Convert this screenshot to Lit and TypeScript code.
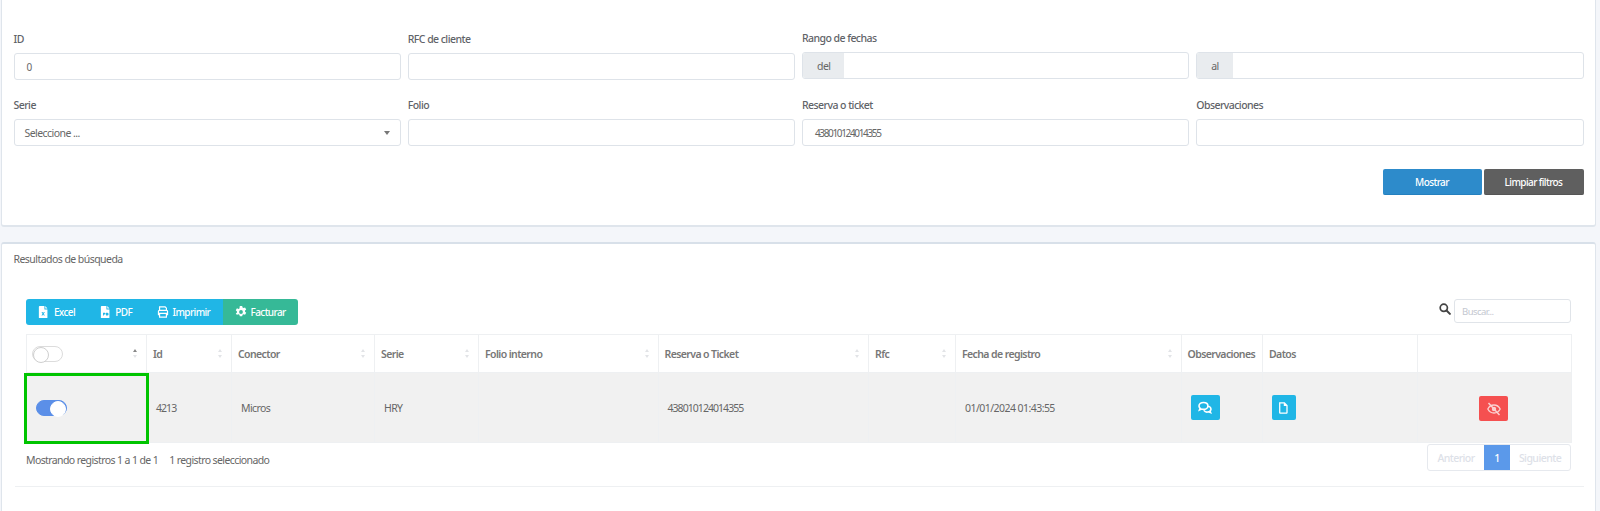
import { LitElement, html, css, svg } from "lit";
import { customElement } from "lit/decorators.js";
import { styleMap } from "lit/directives/style-map.js";

const columns = [
  { w: 120, label: "", sort: true, switch: true },
  { w: 85, label: "Id", sort: true },
  { w: 143, label: "Conector", sort: true },
  { w: 104, label: "Serie", sort: true },
  { w: 179.5, label: "Folio interno", sort: true },
  { w: 210.5, label: "Reserva o Ticket", sort: true },
  { w: 87, label: "Rfc", sort: true },
  { w: 225.5, label: "Fecha de registro", sort: true },
  { w: 81.5, label: "Observaciones", sort: false },
  { w: 155, label: "Datos", sort: false },
  { w: 154, label: "", sort: false },
];

const icons = {
  excel: svg`<path fill="currentColor" d="M2 0h5.5v4H11v9.5a.8.8 0 0 1-.8.8H1.8a.8.8 0 0 1-.8-.8V1a1 1 0 0 1 1-1zM8.5 0 11 3H8.5zM4 7l1.3 2L4 11h1.2L6 9.8 6.8 11H8L6.7 9 8 7H6.800L6 8.200 5.200 7z"/>`,
  pdf: svg`<path fill="currentColor" d="M2 0h5.5v4H11v9.5a.8.8 0 0 1-.8.8H1.8a.8.8 0 0 1-.8-.8V1a1 1 0 0 1 1-1zM8.5 0 11 3H8.5zM3.5 8v3h1V10h1a1 1 0 0 0 0-2zM7 8v3h1.5a1.5 1.5 0 0 0 0-3z"/>`,
  print: svg`<path fill="none" stroke="currentColor" stroke-width="1.4" d="M3 5V1h6.5L11 2.5V5M3 10H1.7V6.2A1.2 1.2 0 0 1 2.9 5h8.2a1.2 1.2 0 0 1 1.2 1.2V10H11M3 8.5h8V13H3z"/>`,
  cog: svg`<path fill="currentColor" fill-rule="evenodd" d="M5.6 0h2.8l.4 1.8 1.2.6 1.7-.7 1.4 2.4-1.4 1.2v1.4l1.4 1.2-1.4 2.4-1.700-.7-1.200.6-.4 1.800H5.600l-.4-1.800-1.200-.6-1.700.7L.9 8.900l1.400-1.200V6.300L.9 5.100l1.400-2.400 1.700.7 1.200-.6zM7 4.800a2.200 2.200 0 1 0 0 4.400 2.200 2.200 0 0 0 0-4.400z"/>`,
  search: svg`<circle cx="5.6" cy="5.6" r="4.2" fill="none" stroke="currentColor" stroke-width="2"/><path d="m8.8 8.8 3.9 3.9" stroke="currentColor" stroke-width="2.4" stroke-linecap="round"/>`,
  comments: svg`<path fill="none" stroke="currentColor" stroke-width="1.6" d="M5.5 1.500C3 1.500 1 3 1 4.900c0 .9.5 1.700 1.100 2.300L1.400 9l2.200-.9c.6.2 1.200.3 1.900.3 2.500 0 4.400-1.500 4.400-3.500S8 1.500 5.500 1.500zM10.600 5.200c1.400.5 2.400 1.500 2.400 2.800 0 .8-.4 1.500-1 2l.6 1.600-2-.8c-1.600.5-3.800 0-4.700-1.400"/>`,
  file: svg`<path fill="none" stroke="currentColor" stroke-width="1.5" d="M2 1h5.500L10.500 4v8.300a.7.7 0 0 1-.7.700H2.700a.7.7 0 0 1-.7-.7zM7.500 1v3h3"/>`,
  eyeoff: svg`<path fill="none" stroke="currentColor" stroke-width="1.3" d="M.8 7C2.200 4.300 4.400 3 7 3s4.800 1.300 6.200 4c-1.400 2.700-3.600 4-6.200 4S2.200 9.700.8 7z"/><circle cx="7" cy="7" r="2.200" fill="currentColor"/><path d="M1.500 1 12.500 13" stroke="currentColor" stroke-width="1.500"/>`,
};

function icon(name: keyof typeof icons, size = 14) {
  return html`<svg class="ic" width=${size} height=${size} viewBox="0 0 14 14" aria-hidden="true">${icons[name]}</svg>`;
}

@customElement("app-root")
export class AppRoot extends LitElement {
  static styles = css`
    :host {
      display: block;
      height: 511px;
      overflow: hidden;
      background: #f4f6fa;
      font-family: "Noto Sans", "Open Sans", sans-serif;
      font-size: 10.5px;
      letter-spacing: -0.55px;
      color: #666;
    }
    * { box-sizing: border-box; }
    .card {
      margin: 0 4px 0 1px;
      background: #fff;
      border: 1px solid #dfe5ec;
      padding: 0 11.5px;
    }
    .filters {
      border-top: 0;
      border-bottom-width: 2px;
      border-radius: 0 0 3px 3px;
      height: 227px;
      padding-top: 32px;
    }
    .grid {
      display: grid;
      grid-template-columns: repeat(4, 1fr);
      column-gap: 7px;
      row-gap: 18px;
    }
    .field { display: flex; flex-direction: column; gap: 7px; }
    .field.up { margin-top: -1px; }
    .field label { height: 14px; line-height: 14px; color: #5f6368; font-weight: 500; }
    .box {
      height: 27px;
      border: 1px solid #dee3e9;
      border-radius: 3px;
      background: #fff;
      display: flex;
      align-items: center;
      padding: 0 12px;
      color: #666;
    }
    .box.sel { padding: 0 10px; justify-content: space-between; }
    .digits { font-size: 10px; letter-spacing: -1.35px; }
    .caret { width: 0; height: 0; border: 3px solid transparent; border-top: 4px solid #777; border-bottom: 0; }
    .group { display: flex; height: 27px; border: 1px solid #dee3e9; border-radius: 3px; overflow: hidden; }
    .addon { background: #e9ecef; display: flex; align-items: center; padding: 0 14px; color: #666; }
    .actions { display: flex; justify-content: flex-end; gap: 2px; margin-top: 23px; }
    .btn {
      height: 26px;
      border-radius: 2px;
      border: 0;
      color: #fff;
      font: inherit;
      font-size: 10px;
      letter-spacing: -0.6px;
      font-weight: 500;
      display: flex;
      align-items: center;
      justify-content: center;
    }
    .primary { width: 99px; background: #2d8bcb; border-bottom: 1px solid #2480bf; }
    .dark { width: 100px; background: #5f5f5f; border-bottom: 1px solid #555; }

    .results {
      margin-top: 15px;
      border-top-width: 2px;
      border-top-color: #d8e0e9;
      border-radius: 3px 3px 0 0;
      height: 269px;
      border-bottom: 0;
    }
    .title { height: 14px; line-height: 14px; margin-top: 8px; color: #666; }
    .inner { padding: 0 12.5px; margin-top: 33px; }
    .bar { display: flex; justify-content: space-between; align-items: flex-start; height: 35px; }
    .toolbar { display: flex; height: 26px; border-radius: 3px; overflow: hidden; }
    .tool {
      display: flex;
      align-items: center;
      gap: 3.5px;
      padding: 0 12.4px;
      background: #20b6e6;
      color: #fff;
      font-weight: 500;
      font-size: 10px;
      letter-spacing: -0.6px;
    }
    .tool.green { background: #36b997; }
    .tool .ic { display: block; }
    .search { display: flex; align-items: center; gap: 3px; color: #444; }
    .search .ic { margin-bottom: 4px; }
    .search .input {
      width: 117px;
      height: 24px;
      border: 1px solid #e0e4e9;
      border-radius: 3px;
      padding: 0 7px;
      font-size: 9.5px;
      display: flex;
      align-items: center;
      color: #c3c7d0;
    }
    table { border-collapse: collapse; table-layout: fixed; width: 1545px; }
    th, td { border: 1px solid #eef0f2; padding: 0; }
    thead tr { height: 38px; }
    th { font-weight: 600; text-align: left; color: #777; padding-left: 6px; position: relative; letter-spacing: -0.6px; }
    tbody tr { height: 70px; background: #f1f1f1; }
    td { color: #666; padding-left: 9px; position: relative; letter-spacing: -0.6px; }
    td.num { letter-spacing: -0.95px; }
    td.date { letter-spacing: -0.55px; }
    td.center { padding-left: 0; text-align: center; }
    .selected::after {
      content: "";
      position: absolute;
      inset: 0 -3px -2px -3px;
      border: 3px solid #00c400;
      pointer-events: none;
    }
    .sort {
      position: absolute;
      right: 9px;
      top: 14px;
      display: flex;
      flex-direction: column;
      gap: 3px;
    }
    .sort i { display: block; width: 0; height: 0; border: 2px solid transparent; }
    .sort .u { border-bottom: 3px solid #e2e4e7; border-top: 0; }
    .sort .d { border-top: 3px solid #e2e4e7; border-bottom: 0; }
    .sort.active .u { border-bottom-color: #888; }
    .switch {
      display: block;
      width: 31px;
      height: 16px;
      border-radius: 8px;
      border: 1px solid #dcdcdc;
      background: #fff;
      position: relative;
    }
    .switch::after {
      content: "";
      position: absolute;
      left: 0;
      top: 0;
      width: 14px;
      height: 14px;
      border-radius: 50%;
      background: #fff;
      border: 1px solid #cfcfcf;
    }
    .switch.on { background: #5b8fe8; border-color: #5b8fe8; }
    .switch.on::after { left: auto; right: 0; border-color: #fff; }
    .sw-th { margin-left: -1px; }
    .act {
      display: inline-flex;
      align-items: center;
      justify-content: center;
      height: 25px;
      border-radius: 2px;
      color: #fff;
      background: #20b6e6;
      vertical-align: middle;
    }
    .act.wide { width: 29px; }
    .act.narrow { width: 24px; }
    .act.red { width: 29px; background: #f55050; color: #fbd0d0; margin-top: 2px; margin-right: 2px; }
    .foot { display: flex; justify-content: space-between; align-items: flex-start; height: 43px; }
    .info { display: flex; gap: 11px; margin-top: 10px; line-height: 14px; letter-spacing: -0.6px; }
    .pager {
      display: flex;
      height: 27px;
      margin-top: 1px;
      border: 1px solid #e6e9ee;
      border-radius: 3px;
      color: #dde1e8;
      font-weight: 500;
    }
    .pager span { display: flex; align-items: center; justify-content: center; }
    .pager .prev { width: 56px; }
    .pager .cur { width: 26px; background: #5b99ea; color: #fff; }
    .pager .next { width: 60px; }
    hr { border: 0; border-top: 1px solid #eef0f2; margin: 0; margin-left: 1px; }
  `;

  private field(label: string, body: unknown, up = false) {
    return html`<div class="field ${up ? "up" : ""}"><label>${label}</label>${body}</div>`;
  }

  private group(addon: string) {
    return html`<div class="group"><span class="addon">${addon}</span></div>`;
  }

  render() {
    return html`
      <section class="card filters">
        <div class="grid">
          ${this.field("ID", html`<div class="box digits">0</div>`)}
          ${this.field("RFC de cliente", html`<div class="box"></div>`)}
          ${this.field("Rango de fechas", this.group("del"), true)}
          ${this.field("\u00a0", this.group("al"), true)}
          ${this.field("Serie", html`<div class="box sel"><span>Seleccione ...</span><span class="caret"></span></div>`)}
          ${this.field("Folio", html`<div class="box"></div>`)}
          ${this.field("Reserva o ticket", html`<div class="box digits">438010124014355</div>`)}
          ${this.field("Observaciones", html`<div class="box"></div>`)}
        </div>
        <div class="actions">
          <button class="btn primary">Mostrar</button>
          <button class="btn dark">Limpiar filtros</button>
        </div>
      </section>
      <section class="card results">
        <div class="title">Resultados de búsqueda</div>
        <div class="inner">
          <div class="bar">
            <div class="toolbar">
              <div class="tool">${icon("excel", 12)}<span>Excel</span></div>
              <div class="tool">${icon("pdf", 12)}<span>PDF</span></div>
              <div class="tool">${icon("print", 12)}<span>Imprimir</span></div>
              <div class="tool green">${icon("cog", 12)}<span>Facturar</span></div>
            </div>
            <div class="search">${icon("search", 12)}<div class="input">Buscar...</div></div>
          </div>
          <table>
            <colgroup>
              ${columns.map((c) => html`<col style=${styleMap({ width: c.w + "px" })} />`)}
            </colgroup>
            <thead>
              <tr>
                ${columns.map(
                  (c) => html`<th>
                    ${c.switch ? html`<span class="switch sw-th"></span>` : c.label}
                    ${c.sort ? html`<span class="sort ${c.switch ? "active" : ""}"><i class="u"></i><i class="d"></i></span>` : ""}
                  </th>`
                )}
              </tr>
            </thead>
            <tbody>
              <tr>
                <td class="selected"><span class="switch on"></span></td>
                <td class="num">4213</td>
                <td>Micros</td>
                <td>HRY</td>
                <td></td>
                <td class="num">438010124014355</td>
                <td></td>
                <td class="date">01/01/2024 01:43:55</td>
                <td><span class="act wide">${icon("comments", 14)}</span></td>
                <td><span class="act narrow">${icon("file", 12)}</span></td>
                <td class="center"><span class="act red">${icon("eyeoff", 14)}</span></td>
              </tr>
            </tbody>
          </table>
          <div class="foot">
            <div class="info"><span>Mostrando registros 1 a 1 de 1</span><span>1 registro seleccionado</span></div>
            <div class="pager"><span class="prev">Anterior</span><span class="cur">1</span><span class="next">Siguiente</span></div>
          </div>
        </div>
        <hr />
      </section>
    `;
  }
}
